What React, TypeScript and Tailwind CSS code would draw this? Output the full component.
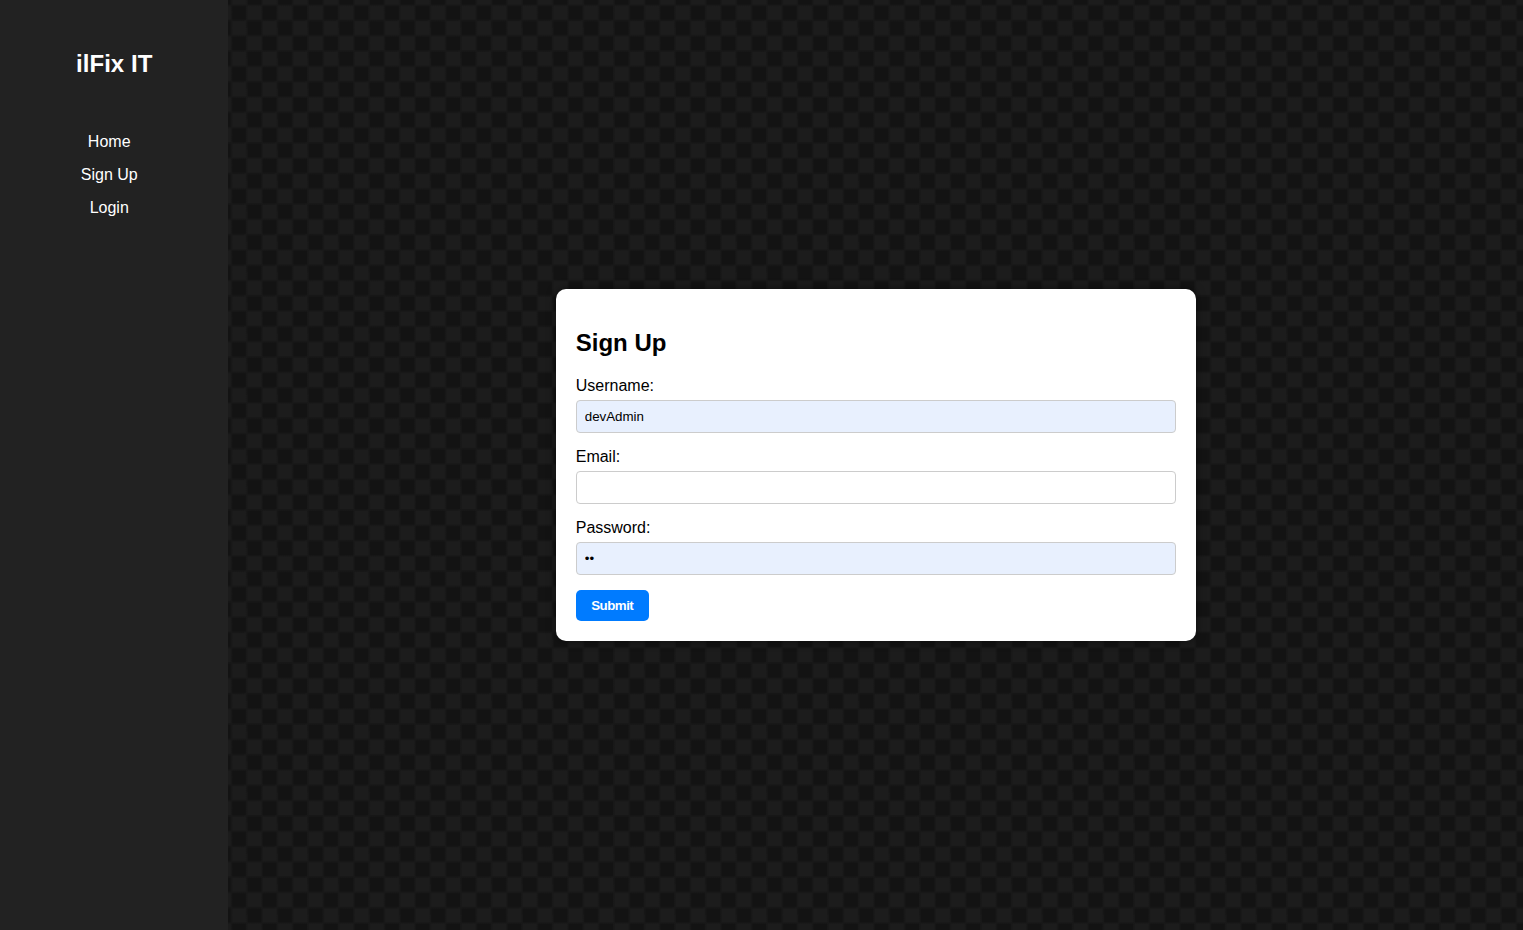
const field =
  "block h-[33px] w-full rounded-[4px] border border-[#ccc] px-2 text-[13.3333px] text-black outline-none";

function Field({ label, type, value, filled }: { label: string; type: string; value: string; filled?: boolean }) {
  return (
    <label className="mb-[15px] block">
      <span className="mb-[5px] block h-[18px] text-base leading-[18px]">{label}</span>
      <input type={type} defaultValue={value} className={filled ? `${field} bg-[#e8f0fe]` : `${field} bg-white`} />
    </label>
  );
}

export default function App() {
  return (
    <div className="flex h-screen overflow-hidden bg-[#181818] font-['Liberation_Sans',Arial,sans-serif]">
      <aside className="flex w-[15%] shrink-0 flex-col items-center bg-[#222] text-white">
        <h1 className="mt-[50px] text-2xl leading-[27px] font-bold tracking-[0.08px]">ilFix IT</h1>
        <nav className="mt-[56px] mr-[10px] flex flex-col items-center gap-[15px] text-base leading-[18px]">
          <a href="#home">Home</a>
          <a href="#signup">Sign Up</a>
          <a href="#login">Login</a>
        </nav>
      </aside>
      <main className="flex flex-1 items-center justify-center bg-[linear-gradient(90deg,#181818_0px,#18181800_1.5px,#18181800_13.8px,#181818_15.3px),linear-gradient(180deg,#181818_0px,#18181800_1.5px,#18181800_13.8px,#181818_15.3px),repeating-conic-gradient(#1c1c1c_0deg_90deg,#131313_90deg_180deg)] bg-[length:15.3px_15.3px,15.3px_15.3px,30.6px_30.6px] bg-[position:3.5px_5.2px]">
        <form className="h-[352px] w-[640px] rounded-[10px] bg-white px-5 pt-10 pb-5 text-black shadow-[0_0_10px_rgba(0,0,0,0.5)]">
          <h2 className="mb-[21px] text-2xl leading-[27px] font-bold">Sign Up</h2>
          <Field label="Username:" type="text" value="devAdmin" filled />
          <Field label="Email:" type="email" value="" />
          <Field label="Password:" type="password" value="ab" filled />
          <button type="button" className="block h-[31px] w-[73px] rounded-[5px] bg-[#007bff] text-[13.3333px] font-bold tracking-[-0.5px] text-white">
            Submit
          </button>
        </form>
      </main>
    </div>
  );
}
